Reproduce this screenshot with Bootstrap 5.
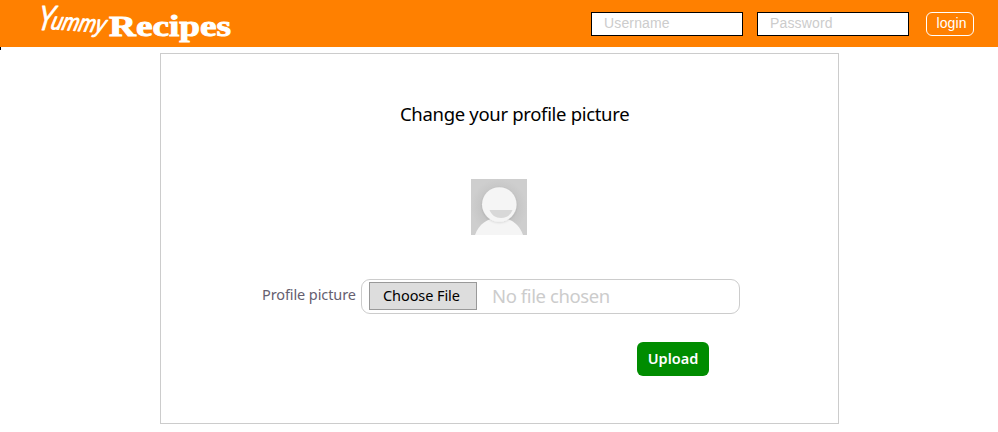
<!DOCTYPE html>
<html lang="en">
<head>
<meta charset="utf-8">
<meta name="viewport" content="width=device-width, initial-scale=1">
<title>Yummy Recipes</title>
<link href="https://cdn.jsdelivr.net/npm/bootstrap@5.3.0/dist/css/bootstrap.min.css" rel="stylesheet">
<style>
body{font-family:"Noto Sans","Open Sans",sans-serif;color:#000;background:#fff;overflow:hidden}
.topbar{height:47px;background:#ff8000;padding:0 24px 0 26px}
.brand-logo{overflow:visible}
.caret-mark{width:1px;height:3px;background:#000}
.login-form{gap:14px}
.login-input{width:152px;height:24px;border:1px solid #000;border-radius:0;padding:0 12px 2px;font:14px/20px "Liberation Sans",sans-serif;letter-spacing:.15px;background:#fff}
.login-input::placeholder{color:#ccc;opacity:1}
.login-btn{width:48px;height:24px;margin-left:3px;border:1px solid #fff;border-radius:6px;color:#fff;font:14px/20px "Liberation Sans",sans-serif;padding:0 0 2px 3px;letter-spacing:.1px}
.panel{width:679px;height:371px;margin:3px 0 0 160px;border:1px solid #ccc}
.panel-title{font-size:18.5px;letter-spacing:-.32px;line-height:26px;margin:47px 0 0 239px;font-weight:400;white-space:nowrap}
.avatar{display:block;margin:52px 0 0 310px}
.file-row{margin:44px 0 0 101px}
.file-label{width:99px;font-size:14.5px;letter-spacing:-.1px;line-height:30px;color:#666070;white-space:nowrap}
.file-box{width:379px;height:35px;border:1px solid #ccc;border-radius:9px;padding:0 0 2px 7px}
.choose{width:108px;height:28px;background:#ddd;border:1px solid #999;border-radius:0;font-size:14.5px;letter-spacing:-.08px;line-height:24px;padding:0 0 1px 13px;text-align:left;white-space:nowrap;color:#000}
.file-name{font-size:18.5px;letter-spacing:-.4px;line-height:31px;color:#ccc;margin-left:15px;white-space:nowrap}
.upload{width:72px;height:34px;margin:28px 0 0 476px;background:#008c00;border:0;border-radius:6px;color:#fff;font-size:14.5px;font-weight:600;line-height:30px;padding:0 0 2px}
</style>
</head>
<body>
<header class="topbar d-flex align-items-center justify-content-between">
  <svg class="brand-logo" width="210" height="47" viewBox="26 0 210 47" fill="#fff" stroke="#fff" role="img" aria-label="Yummy Recipes">
    <g font-family="Liberation Sans, sans-serif" font-style="italic" stroke-width=".9" stroke-linejoin="round">
      <text transform="translate(36 30) skewX(-9)" font-size="35" textLength="17" lengthAdjust="spacingAndGlyphs">Y</text>
      <text transform="translate(50 29) rotate(4) skewX(-10)" font-size="24" textLength="54" lengthAdjust="spacingAndGlyphs">ummy</text>
    </g>
    <text x="109" y="36" font-family="Liberation Serif, serif" font-weight="700" font-size="30" stroke-width=".9" textLength="122" lengthAdjust="spacingAndGlyphs">Recipes</text>
  </svg>
  <form class="login-form d-flex align-items-center">
    <input class="login-input form-control" type="text" placeholder="Username" aria-label="Username">
    <input class="login-input form-control" type="password" placeholder="Password" aria-label="Password">
    <button class="login-btn btn" type="button">login</button>
  </form>
</header>
<div class="caret-mark"></div>
<main class="panel">
  <h1 class="panel-title">Change your profile picture</h1>
  <svg class="avatar" width="56" height="56" viewBox="0 0 56 56" aria-label="Profile">
    <defs>
      <radialGradient id="bg"><stop offset=".5" stop-color="#c2c2c2"/><stop offset="1" stop-color="#cecece"/></radialGradient>
      <filter id="sh" x="-30%" y="-30%" width="160%" height="160%"><feDropShadow dx="0" dy="1" stdDeviation="1.2" flood-opacity=".12"/></filter>
    </defs>
    <path fill="url(#bg)" d="M0 0h56v56H0z"/>
    <path fill="#f5f5f5" d="M4 56C8 45 16 39 28 39s20 6 24 17z"/>
    <circle cx="28.3" cy="25.5" r="17.3" fill="#f5f5f5" filter="url(#sh)"/>
    <path fill="#d8d8d8" d="M18.500 31h23c-2 5-6 8-11.500 8s-9.500-3-11.500-8z"/>
  </svg>
  <div class="file-row d-flex">
    <label class="file-label">Profile picture</label>
    <div class="file-box d-flex align-items-center">
      <button class="choose btn" type="button">Choose File</button>
      <span class="file-name">No file chosen</span>
    </div>
  </div>
  <button class="upload btn" type="button">Upload</button>
</main>
<script src="https://cdn.jsdelivr.net/npm/bootstrap@5.3.0/dist/js/bootstrap.bundle.min.js"></script>
</body>
</html>
